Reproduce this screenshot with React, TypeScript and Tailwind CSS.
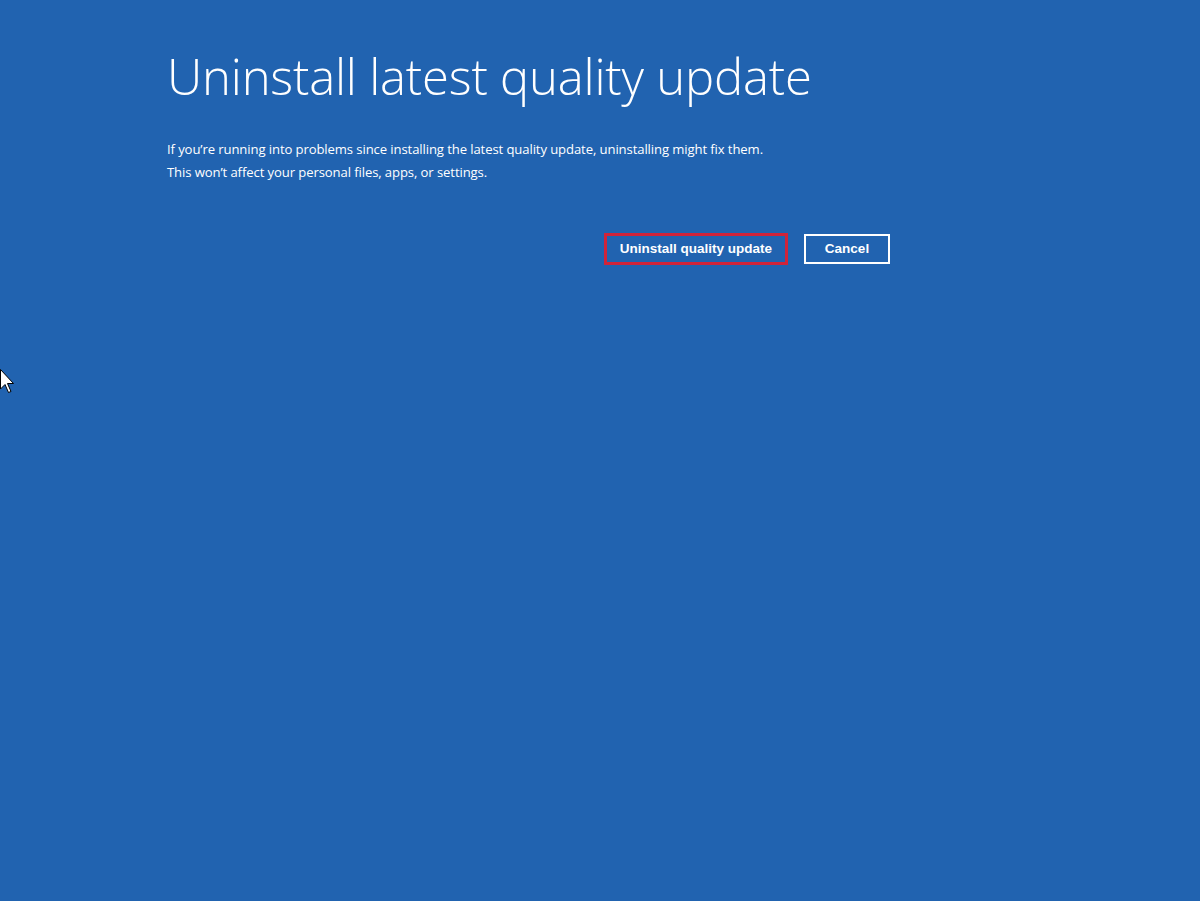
import React from "react";

export default function App() {
  return (
    <div className="relative w-[1200px] h-[901px] overflow-hidden bg-[#2163b0] text-white" style={{ fontFamily: '"Open Sans", "Noto Sans", sans-serif' }}>
      <div className="pl-[167px] pt-[44px] w-[900px]">
        <h1 className="text-[49px] font-light leading-[64px] tracking-[-0.2px]">Uninstall latest quality update</h1>
        <p className="mt-[30px] text-[13.1px] leading-[23px] tracking-[-0.1px]">
          If you’re running into problems since installing the latest quality update, uninstalling might fix them.
          <br />
          This won’t affect your personal files, apps, or settings.
        </p>
        <div className="mt-[49px] flex justify-end gap-[16px] pr-[10px]">
          <button className="h-[32px] w-[184px] border-[3px] border-[#d0243a] text-[13.5px] font-bold" style={{ fontFamily: '"Liberation Sans", sans-serif' }}>
            Uninstall quality update
          </button>
          <button className="h-[30px] w-[86px] mt-[1px] border-2 border-white text-[13.5px] font-bold" style={{ fontFamily: '"Liberation Sans", sans-serif' }}>
            Cancel
          </button>
        </div>
      </div>
      <svg className="absolute left-0 top-[369px]" width="16" height="26" viewBox="0 0 16 26">
        <path d="M0.5 0.5 L0.5 20 L5 15.5 L8.5 23.5 L11 22.5 L7.5 14.5 L13.5 14.5 Z" fill="white" stroke="black" strokeWidth="1" />
      </svg>
    </div>
  );
}
